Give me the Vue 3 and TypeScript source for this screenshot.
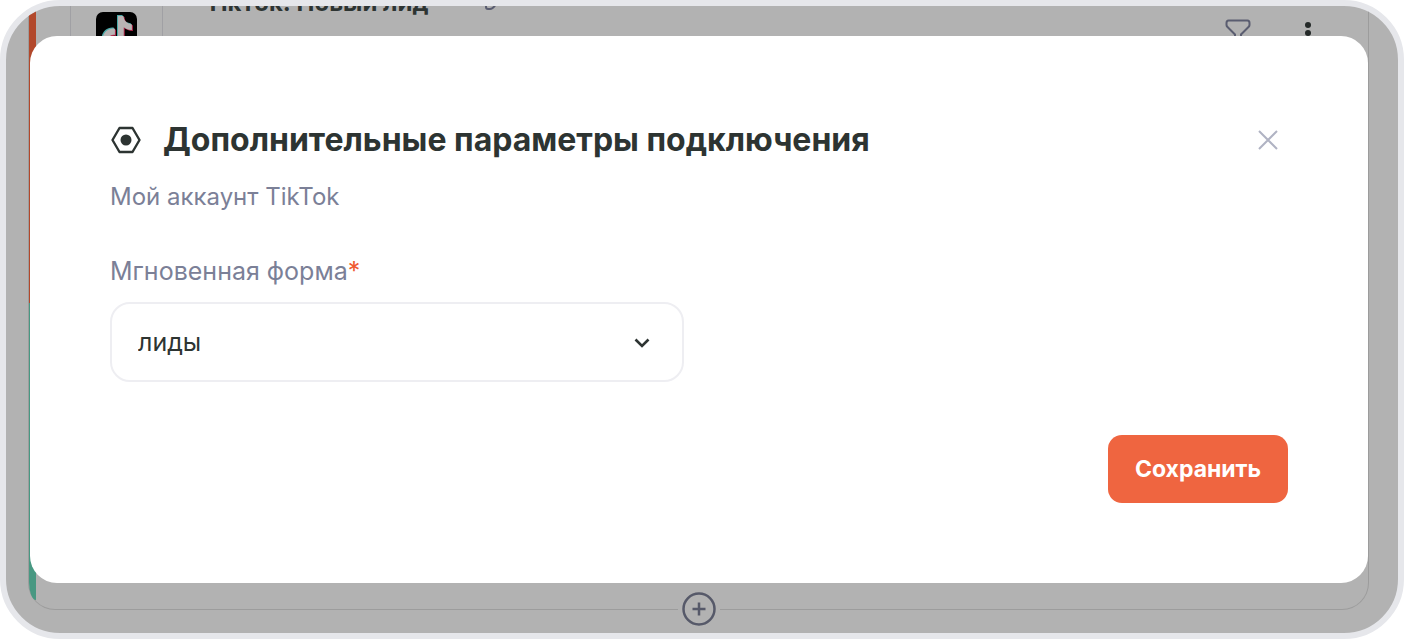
<script setup lang="ts">
import { ref } from 'vue'

const forms: string[] = ['лиды']
const selectedForm = ref(forms[0])

const note =
  'M12.525.02c1.31-.02 2.61-.01 3.91-.02.08 1.53.63 3.09 1.75 4.17 1.12 1.11 2.7 1.62 4.24 1.79v4.03c-1.44-.05-2.89-.35-4.2-.97-.57-.26-1.1-.59-1.62-.93-.01 2.92.01 5.84-.02 8.75-.08 1.4-.54 2.79-1.35 3.94-1.31 1.92-3.58 3.17-5.91 3.21-1.43.08-2.86-.31-4.08-1.03-2.02-1.19-3.44-3.37-3.65-5.71-.02-.5-.03-1-.01-1.49.18-1.9 1.12-3.72 2.58-4.96 1.66-1.44 3.98-2.13 6.15-1.72.02 1.48-.04 2.96-.04 4.44-.99-.32-2.15-.23-3.02.37-.63.41-1.11 1.04-1.36 1.75-.21.51-.15 1.07-.14 1.61.24 1.64 1.82 3.02 3.5 2.87 1.12-.01 2.19-.66 2.77-1.61.19-.33.4-.67.41-1.06.1-1.79.06-3.57.07-5.36.01-4.03-.01-8.05.02-12.07z'
</script>

<template>
  <div class="frame">
    <section class="card">
      <div class="stripe"></div>
      <div class="card-head">
        <div class="app-cell">
          <svg class="app-icon" viewBox="0 0 41 41" aria-hidden="true">
            <rect width="41" height="41" rx="7" fill="#000" />
            <path :d="note" transform="translate(3.500 3) scale(1.4)" fill="#4aa9a8" />
            <path :d="note" transform="translate(5.500 5) scale(1.4)" fill="#b3284a" />
            <path :d="note" transform="translate(4.500 4) scale(1.4)" fill="#b8b4b4" />
          </svg>
        </div>
        <div class="card-title">
          <span>TikTok: Новый лид</span>
          <svg class="pencil" viewBox="0 0 20 20" aria-hidden="true">
            <path d="M5 10v6q0 2 2 2h2q3 0 6-5" fill="none" stroke="#5a5d70" stroke-width="2" />
          </svg>
        </div>
        <div class="tools">
          <svg class="filter" viewBox="0 0 26 28" aria-hidden="true">
            <path d="M1.500 4q0-2.500 2-2.500h19q2 0 2 2.500v2q0 1-1 2l-7.500 7.500v9l-6 2v-11L2.500 8q-1-1-1-2z" fill="none" stroke="#5a5d70" stroke-width="2" />
          </svg>
          <svg class="dots" viewBox="0 0 8 24" aria-hidden="true">
            <circle cx="4" cy="4" r="3" /><circle cx="4" cy="12" r="3" /><circle cx="4" cy="20" r="3" />
          </svg>
        </div>
      </div>
      <button class="add" type="button" aria-label="Добавить">
        <svg viewBox="0 0 34 34" aria-hidden="true">
          <g fill="none" stroke="#565969" stroke-width="2.500">
            <circle cx="17" cy="17" r="15.500" />
            <path d="M17 10.500v13M10.500 17h13" />
          </g>
        </svg>
      </button>
    </section>

    <form class="modal" role="dialog" aria-labelledby="dialog-title" @submit.prevent>
      <header class="head">
        <svg class="hex" viewBox="0 0 30 28" aria-hidden="true">
          <path d="M8.500 2h13L28.500 14l-7 12h-13L1.500 14z" fill="none" stroke="#2d3432" stroke-width="2.400" stroke-linejoin="round" />
          <circle cx="15" cy="14" r="5.500" fill="#2d3432" />
        </svg>
        <h1 id="dialog-title">Дополнительные параметры подключения</h1>
        <button class="close" type="button" aria-label="Закрыть">
          <svg viewBox="0 0 20 20" aria-hidden="true">
            <path d="M1 1l18 18M19 1L1 19" stroke="#b0b3c3" stroke-width="2" />
          </svg>
        </button>
      </header>
      <p class="account">Мой аккаунт TikTok</p>
      <label class="label" for="form-select">Мгновенная форма<span class="star">*</span></label>
      <div class="select">
        <select id="form-select" v-model="selectedForm">
          <option v-for="form in forms" :key="form" :value="form">{{ form }}</option>
        </select>
        <svg class="chevron" viewBox="0 0 16 10" aria-hidden="true">
          <path d="M1.500 1.500L8 8l6.500-6.500" fill="none" stroke="#2d3432" stroke-width="2.600" />
        </svg>
      </div>
      <button class="save" type="submit">Сохранить</button>
    </form>
  </div>
</template>

<style>
body {
  background: #fff;
}
</style>

<style scoped>
.frame {
  box-sizing: border-box;
  min-height: 100vh;
  display: grid;
  grid-template: 1fr / minmax(0, 1fr);
  border: 6px solid #e6e7eb;
  border-radius: 60px;
  overflow: hidden;
  background: #b2b2b2;
  font-family: Inter, "Liberation Sans", sans-serif;
  color: #2d3432;
}
.card {
  grid-area: 1 / 1;
  position: relative;
  display: flex;
  margin: 0 29px 23px 22px;
  border: 1px solid #9c9c9c;
  border-top: 0;
  border-radius: 0 0 27px 27px;
}
.stripe {
  width: 7px;
  margin-bottom: 9px;
  border-bottom-left-radius: 7px 18px;
  background: linear-gradient(#b2482b 50%, #489882 50%);
}
.card-head {
  flex: 1;
  height: 60px;
  display: flex;
}
.app-cell {
  width: 91px;
  margin-left: 34px;
  padding-top: 6px;
  border: 1px solid #a0a0a4;
  border-width: 0 1px;
  text-align: center;
}
.app-icon {
  width: 41px;
  height: 41px;
}
.card-title {
  display: flex;
  gap: 52px;
  margin-left: 42px;
  height: 24px;
  margin-top: -15px;
  font-size: 24px;
  line-height: 24px;
  font-weight: 700;
}
.pencil {
  width: 20px;
  height: 20px;
}
.tools {
  display: flex;
  align-items: flex-start;
  gap: 53px;
  margin-left: auto;
  padding: 13px 56px 0 0;
}
.filter {
  width: 26px;
  height: 28px;
}
.dots {
  width: 8px;
  height: 24px;
  margin-top: 2px;
  fill: #242928;
}
.add {
  position: absolute;
  left: 50%;
  bottom: 0;
  transform: translate(-50%, 50%);
  display: flex;
  padding: 0 4px;
  border: 0;
  background: #b2b2b2;
}
.add svg {
  width: 34px;
  height: 34px;
}
.modal {
  grid-area: 1 / 1;
  z-index: 1;
  display: flex;
  flex-direction: column;
  align-items: flex-start;
  margin: 30px 30px 50px 24px;
  padding: 80px;
  border-radius: 27px;
  background: #fff;
}
.head {
  align-self: stretch;
  display: flex;
  align-items: center;
  height: 48px;
}
.hex {
  width: 30px;
  height: 28px;
  margin-left: 1px;
}
h1 {
  margin: 0 auto 0 22px;
  font-size: 32px;
  line-height: 48px;
  font-weight: 700;
}
.close {
  display: flex;
  padding: 10px;
  border: 0;
  background: none;
}
.close svg {
  width: 20px;
  height: 20px;
}
.account {
  margin: 15px 0 0;
  font-size: 24px;
  line-height: 36px;
  color: #7b8097;
}
.label {
  margin-top: 38px;
  font-size: 25px;
  line-height: 36px;
  color: #7b8097;
}
.star {
  color: #f05a32;
}
.select {
  position: relative;
  width: 574px;
  max-width: 100%;
  margin-top: 13px;
}
select {
  appearance: none;
  width: 100%;
  height: 80px;
  padding: 0 72px 0 26px;
  border: 2px solid #eeeef2;
  border-radius: 20px;
  background: #fff;
  font: 400 25px Inter, "Liberation Sans", sans-serif;
  color: #2d3432;
}
.chevron {
  position: absolute;
  top: 36px;
  right: 34px;
  width: 16px;
  height: 10px;
  pointer-events: none;
}
.save {
  align-self: flex-end;
  margin-top: auto;
  width: 180px;
  height: 68px;
  padding: 0;
  border: 0;
  border-radius: 14px;
  background: #ef6540;
  color: #fff;
  font: 700 23px Inter, "Liberation Sans", sans-serif;
}
</style>
